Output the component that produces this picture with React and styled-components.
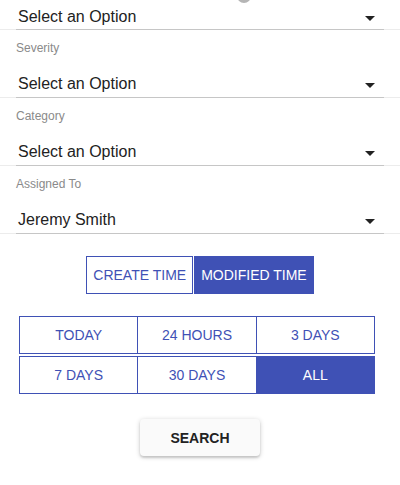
import React, { useState } from "react";
import styled, { createGlobalStyle } from "styled-components";

const indigo = "#3f51b5";

const GlobalStyle = createGlobalStyle`
  body {
    margin: 0;
    background: #fff;
    font-family: "Liberation Sans", Arial, sans-serif;
  }
`;

const Page = styled.div`
  position: relative;
  height: 485px;
  overflow: hidden;
`;

const ScrollKnob = styled.div`
  position: absolute;
  top: -11px;
  left: 237px;
  width: 14px;
  height: 14px;
  border-radius: 50%;
  background: #b5b5b5;
`;

const FieldBlock = styled.div`
  padding: 0 16px;
  border-bottom: 1px solid #ececec;
`;

const Label = styled.div`
  padding-top: 11px;
  font-size: 12px;
  line-height: 14px;
  color: #8a8a8a;
`;

const SelectRow = styled.div`
  display: flex;
  align-items: center;
  height: 24px;
  margin-top: ${(p) => (p.$first ? "5px" : "17px")};
  padding: 0 0 ${(p) => (p.$first ? "0" : "1px")} 2px;
  margin-bottom: -1px;
  border-bottom: 1px solid #c6c6c6;
  box-sizing: content-box;
`;

const SelectValue = styled.span`
  flex: 1;
  font-size: 16px;
  line-height: 24px;
  color: #222;
`;

const Caret = styled.svg`
  width: 24px;
  height: 24px;
  margin: 2px 2px 0 0;
  fill: #222;
`;

const ToggleGroup = styled.div`
  display: flex;
  justify-content: center;
  gap: 1px;
  margin-top: 22px;
`;

const Toggle = styled.button`
  height: 38px;
  padding: 0 6px;
  border: 1px solid ${indigo};
  background: ${(p) => (p.$active ? indigo : "#fff")};
  color: ${(p) => (p.$active ? "#fff" : indigo)};
  font-family: inherit;
  font-size: 14px;
  cursor: pointer;
`;

const TimeGrid = styled.div`
  display: flex;
  flex-direction: column;
  gap: 2px;
  margin: 22px 25px 0 19px;
`;

const TimeRow = styled.div`
  display: flex;
`;

const TimeCell = styled.button`
  flex: 1;
  height: 38px;
  padding: 0;
  border: 1px solid ${indigo};
  background: ${(p) => (p.$active ? indigo : "#fff")};
  color: ${(p) => (p.$active ? "#fff" : indigo)};
  font-family: inherit;
  font-size: 14px;
  cursor: pointer;

  & + & {
    margin-left: -1px;
  }
`;

const SearchWrap = styled.div`
  display: flex;
  justify-content: center;
  margin-top: 25px;
`;

const SearchButton = styled.button`
  width: 120px;
  height: 37px;
  border: none;
  border-radius: 4px;
  background: #fafafa;
  box-shadow: 0 1px 5px rgba(0, 0, 0, 0.2), 0 2px 2px rgba(0, 0, 0, 0.12);
  font-family: inherit;
  font-size: 14px;
  font-weight: bold;
  color: #222;
  cursor: pointer;
`;

function Field({ label, value, first }) {
  return (
    <FieldBlock>
      {label && <Label>{label}</Label>}
      <SelectRow $first={first}>
        <SelectValue>{value}</SelectValue>
        <Caret viewBox="0 0 24 24">
          <path d="M7 10l5 5 5-5z" />
        </Caret>
      </SelectRow>
    </FieldBlock>
  );
}

const ranges = [
  ["TODAY", "24 HOURS", "3 DAYS"],
  ["7 DAYS", "30 DAYS", "ALL"],
];

export default function App() {
  const [timeField, setTimeField] = useState("modified");
  const [range, setRange] = useState("ALL");

  return (
    <Page>
      <GlobalStyle />
      <ScrollKnob />
      <Field first value="Select an Option" />
      <Field label="Severity" value="Select an Option" />
      <Field label="Category" value="Select an Option" />
      <Field label="Assigned To" value="Jeremy Smith" />

      <ToggleGroup>
        <Toggle $active={timeField === "create"} onClick={() => setTimeField("create")}>
          CREATE TIME
        </Toggle>
        <Toggle $active={timeField === "modified"} onClick={() => setTimeField("modified")}>
          MODIFIED TIME
        </Toggle>
      </ToggleGroup>

      <TimeGrid>
        {ranges.map((row, i) => (
          <TimeRow key={i}>
            {row.map((r) => (
              <TimeCell key={r} $active={range === r} onClick={() => setRange(r)}>
                {r}
              </TimeCell>
            ))}
          </TimeRow>
        ))}
      </TimeGrid>

      <SearchWrap>
        <SearchButton>SEARCH</SearchButton>
      </SearchWrap>
    </Page>
  );
}
